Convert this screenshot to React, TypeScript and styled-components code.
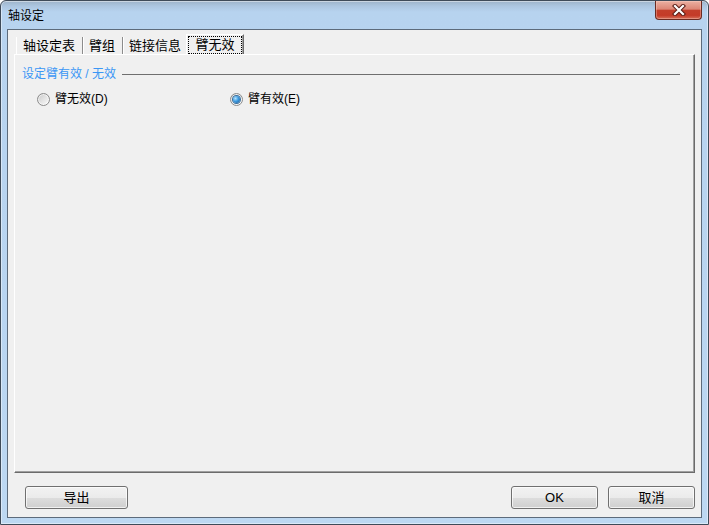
import React from 'react';
import styled, { createGlobalStyle } from 'styled-components';

const GlobalStyle = createGlobalStyle`
  html, body {
    margin: 0;
    padding: 0;
    background: #ffffff;
  }
  body {
    font-family: "Liberation Sans", "Noto Sans CJK SC", sans-serif;
    font-size: 12px;
    color: #000;
  }
  * {
    box-sizing: border-box;
  }
`;

const Window = styled.div`
  width: 709px;
  height: 525px;
  border: 1px solid #3f4b59;
  border-radius: 6px 6px 0 0;
  padding: 0 6px 6px;
  display: flex;
  flex-direction: column;
  background: linear-gradient(180deg, #9db3c9 0px, #acc6e0 5px, #b7d3ef 11px, #b9d5f1 60%, #bdd8f2 100%);
  box-shadow: inset 0 0 0 1px rgba(255, 255, 255, 0.45);
`;

const TitleBar = styled.div`
  height: 28px;
  display: flex;
  align-items: flex-start;
`;

const Title = styled.span`
  padding: 7px 0 0 1px;
  font-size: 12px;
  line-height: 16px;
  color: #000;
`;

const CloseButton = styled.div`
  margin-left: auto;
  width: 47px;
  height: 19px;
  display: flex;
  align-items: center;
  justify-content: center;
  border: 1px solid #6b2b22;
  border-top: none;
  border-radius: 0 0 4px 4px;
  background: linear-gradient(180deg, #ebb0a2 0%, #dc8675 45%, #c33f2b 52%, #c43b28 80%, #d6705a 100%);
  box-shadow: inset 0 0 0 1px rgba(255, 220, 210, 0.35);
`;

const Client = styled.div`
  flex: 1;
  border: 1px solid #5d6b7b;
  background: #f0f0f0;
  padding: 4px 6px 8px;
  display: flex;
  flex-direction: column;
`;

const TabStrip = styled.div`
  height: 20px;
  padding-left: 2px;
  display: flex;
  align-items: flex-end;
`;

const Tab = styled.div<{ $width: number; $first?: boolean; $sep?: boolean }>`
  width: ${p => p.$width}px;
  height: 17px;
  padding-left: 6px;
  display: flex;
  align-items: center;
  font-size: 13px;
  line-height: 16px;
  border-left: ${p => (p.$first ? '1px solid #ffffff' : 'none')};
  border-right: ${p => (p.$sep ? '1px solid #8c8c8c' : 'none')};
  box-shadow: ${p => (p.$sep ? '1px 0 0 #ffffff' : 'none')};
  white-space: nowrap;
`;

const ActiveTab = styled.div`
  width: 58px;
  height: 20px;
  margin-left: 1px;
  padding: 1px 0 0 1px;
  border-top: 1px solid #ffffff;
  border-left: 1px solid #ffffff;
  border-right: 1px solid #6b6b6b;
  box-shadow: inset -1px 0 0 #a0a0a0;
  display: flex;
`;

const FocusLabel = styled.span`
  flex: 1;
  margin-right: 1px;
  border: 1px dotted #000;
  display: flex;
  align-items: center;
  justify-content: center;
  font-size: 13px;
  line-height: 16px;
`;

const Panel = styled.div`
  height: 419px;
  border-top: 1px solid #ffffff;
  border-left: 1px solid #ffffff;
  border-right: 1px solid #6b6b6b;
  border-bottom: 1px solid #6b6b6b;
  box-shadow: inset -1px -1px 0 #a0a0a0;
  padding: 11px 14px 0 7px;
`;

const GroupHeader = styled.div`
  display: flex;
  align-items: center;
  gap: 6px;
  height: 16px;
`;

const GroupLabel = styled.span`
  color: #3b97f5;
  font-size: 12px;
  line-height: 16px;
  white-space: nowrap;
`;

const GroupLine = styled.span`
  flex: 1;
  height: 1px;
  background: #6f6f6f;
`;

const RadioRow = styled.div`
  margin-top: 9px;
  padding-left: 15px;
  display: grid;
  grid-template-columns: 193px 193px;
`;

const RadioItem = styled.label`
  display: flex;
  align-items: center;
  gap: 5px;
  height: 16px;
  font-size: 12px;
  line-height: 16px;
`;

const RadioDot = styled.span<{ $checked?: boolean }>`
  position: relative;
  width: 13px;
  height: 13px;
  border-radius: 50%;
  border: 1px solid #8b8b8b;
  background: linear-gradient(135deg, #c9c9c9 0%, #e6e6e6 55%, #fbfbfb 100%);
  box-shadow: inset 0 0 0 1px rgba(255, 255, 255, 0.6);
  &::after {
    content: '';
    display: ${p => (p.$checked ? 'block' : 'none')};
    position: absolute;
    left: 2px;
    top: 2px;
    width: 7px;
    height: 7px;
    border-radius: 50%;
    background: radial-gradient(circle at 35% 35%, #b4e4ff 0%, #3d9ae0 45%, #175590 100%);
    box-shadow: 0 0 0 1px #3b6f9c;
  }
`;

const ButtonBar = styled.div`
  margin-top: 13px;
  height: 23px;
  padding-left: 11px;
  display: flex;
  gap: 10px;
`;

const PushButton = styled.button<{ $width: number; $push?: boolean }>`
  width: ${p => p.$width}px;
  height: 23px;
  margin-left: ${p => (p.$push ? 'auto' : '0')};
  border: 1px solid #707070;
  border-radius: 3px;
  background: linear-gradient(180deg, #f2f2f2 0%, #ebebeb 50%, #dddddd 51%, #cfcfcf 100%);
  box-shadow: inset 0 0 0 1px rgba(255, 255, 255, 0.7);
  font-family: "Liberation Sans", "Noto Sans CJK SC", sans-serif;
  font-size: 13px;
  line-height: 16px;
  color: #000;
  padding: 0;
`;

function CloseGlyph() {
  return (
    <svg width="14" height="12" viewBox="0 0 14 12">
      <path d="M3 2 L11 10 M11 2 L3 10" stroke="#5a1c14" strokeWidth="4.2" strokeLinecap="square" />
      <path d="M3 2 L11 10 M11 2 L3 10" stroke="#ffffff" strokeWidth="2.2" strokeLinecap="square" />
    </svg>
  );
}

export default function App() {
  return (
    <>
      <GlobalStyle />
      <Window>
        <TitleBar>
          <Title>轴设定</Title>
          <CloseButton>
            <CloseGlyph />
          </CloseButton>
        </TitleBar>
        <Client>
          <TabStrip>
            <Tab $width={67} $first $sep>
              轴设定表
            </Tab>
            <Tab $width={40} $sep>
              臂组
            </Tab>
            <Tab $width={62}>链接信息</Tab>
            <ActiveTab>
              <FocusLabel>臂无效</FocusLabel>
            </ActiveTab>
          </TabStrip>
          <Panel>
            <GroupHeader>
              <GroupLabel>设定臂有效 / 无效</GroupLabel>
              <GroupLine />
            </GroupHeader>
            <RadioRow>
              <RadioItem>
                <RadioDot />
                臂无效(D)
              </RadioItem>
              <RadioItem>
                <RadioDot $checked />
                臂有效(E)
              </RadioItem>
            </RadioRow>
          </Panel>
          <ButtonBar>
            <PushButton $width={103}>导出</PushButton>
            <PushButton $width={87} $push>
              OK
            </PushButton>
            <PushButton $width={87}>取消</PushButton>
          </ButtonBar>
        </Client>
      </Window>
    </>
  );
}
